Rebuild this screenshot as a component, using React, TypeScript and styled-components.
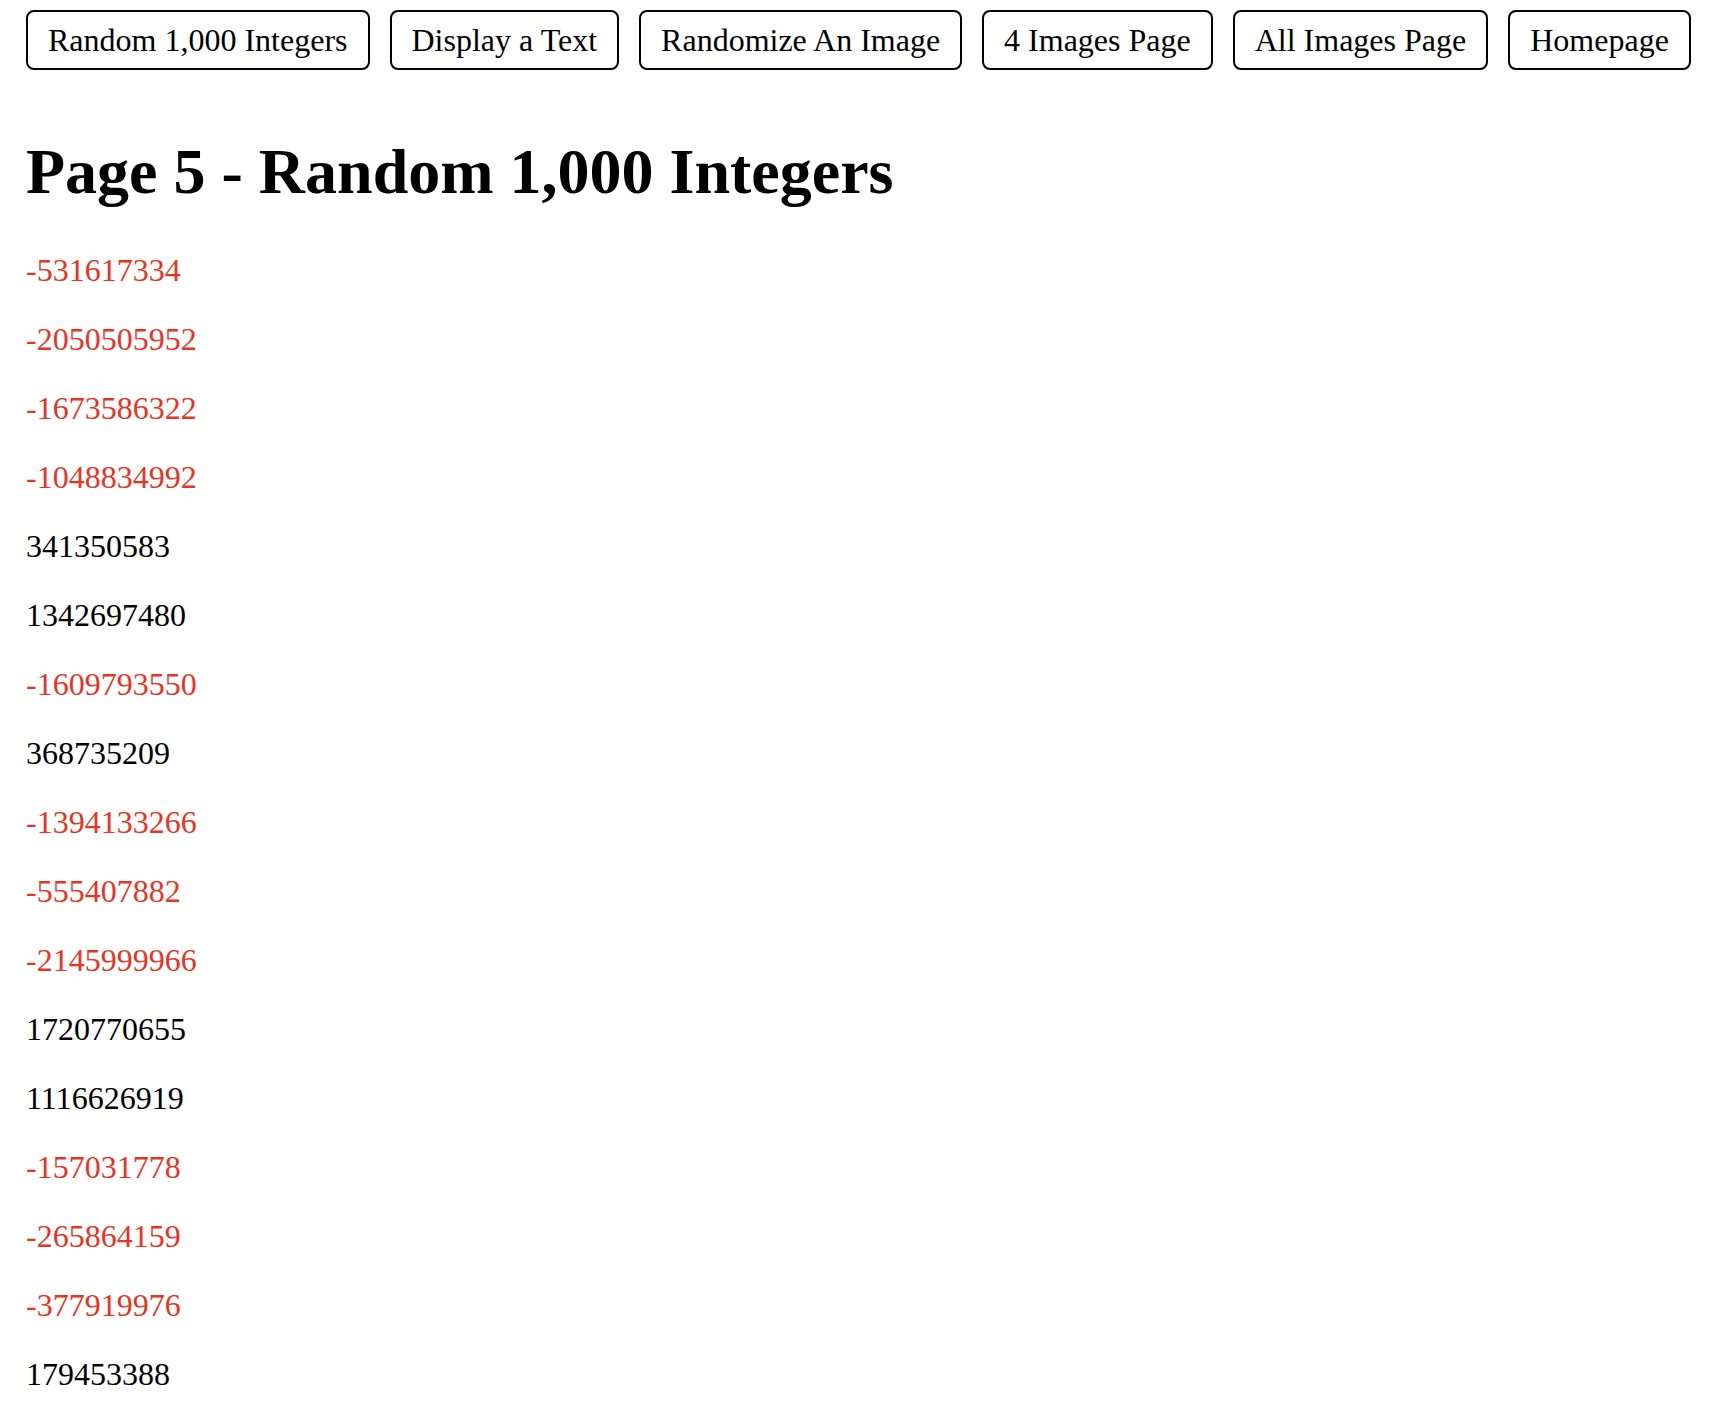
import React from "react";
import styled, { createGlobalStyle } from "styled-components";

const GlobalStyle = createGlobalStyle`
  html, body {
    margin: 0;
    padding: 0;
    background: #ffffff;
  }
  body {
    font-family: "Liberation Serif", "Times New Roman", serif;
    color: #000000;
  }
`;

const Page = styled.div`
  padding: 10px 0 0 26px;
`;

const Nav = styled.nav`
  display: flex;
  flex-wrap: nowrap;
  gap: 20px;
`;

const NavButton = styled.button`
  height: 60px;
  padding: 0 20px 1px;
  border: 2px solid #000000;
  border-radius: 8px;
  background: #ffffff;
  color: #000000;
  font-family: "Liberation Serif", "Times New Roman", serif;
  font-size: 32px;
  line-height: 36px;
  white-space: nowrap;
  cursor: pointer;
`;

const Title = styled.h1`
  margin: 65px 0 43px;
  font-size: 64px;
  line-height: 74px;
  font-weight: bold;
`;

const List = styled.div`
  display: flex;
  flex-direction: column;
  gap: 32px;
`;

const Num = styled.p<{ $negative: boolean }>`
  margin: 0;
  font-size: 32px;
  line-height: 37px;
  color: ${(p) => (p.$negative ? "#ea3323" : "#000000")};
`;

const links = [
  "Random 1,000 Integers",
  "Display a Text",
  "Randomize An Image",
  "4 Images Page",
  "All Images Page",
  "Homepage",
];

const numbers = [
  -531617334, -2050505952, -1673586322, -1048834992, 341350583, 1342697480,
  -1609793550, 368735209, -1394133266, -555407882, -2145999966, 1720770655,
  1116626919, -157031778, -265864159, -377919976, 179453388,
];

export default function App() {
  return (
    <>
      <GlobalStyle />
      <Page>
        <Nav>
          {links.map((l) => (
            <NavButton key={l}>{l}</NavButton>
          ))}
        </Nav>
        <Title>Page 5 - Random 1,000 Integers</Title>
        <List>
          {numbers.map((n, i) => (
            <Num key={i} $negative={n < 0}>
              {n}
            </Num>
          ))}
        </List>
      </Page>
    </>
  );
}
